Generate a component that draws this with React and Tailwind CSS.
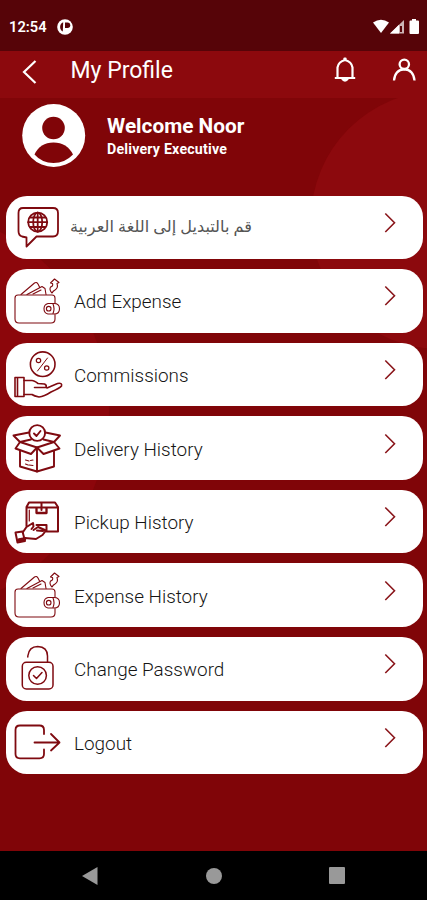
const MENU = [
  { id: "language", label: "قم بالتبديل إلى اللغة العربية", icon: LanguageIcon, arabic: true },
  { id: "add-expense", label: "Add Expense", icon: WalletIcon },
  { id: "commissions", label: "Commissions", icon: CommissionIcon },
  { id: "delivery", label: "Delivery History", icon: OpenBoxIcon },
  { id: "pickup", label: "Pickup History", icon: PickupIcon },
  { id: "expense", label: "Expense History", icon: WalletIcon },
  { id: "password", label: "Change Password", icon: LockIcon },
  { id: "logout", label: "Logout", icon: LogoutIcon },
];

function MenuSvg({ children, width = 1.4 }) {
  return (
    <svg
      viewBox="12 2 52 60"
      className="h-[60px] w-[52px] shrink-0"
      fill="none"
      stroke="#7f0a10"
      strokeWidth={width}
      strokeLinecap="round"
      strokeLinejoin="round"
    >
      {children}
    </svg>
  );
}

function LanguageIcon() {
  return (
    <MenuSvg width={1.8}>
      <path d="M23 13H53Q58 13 58 18V36Q58 41.500 53 41.500H36.500L26.500 51.500V42.500L22 41.500Q18.500 40.500 18.500 36V18Q18.500 13 23 13Z" />
      <circle cx="37.700" cy="27.200" r="9.500" />
      <ellipse cx="37.700" cy="27.200" rx="4.500" ry="9.500" />
      <path d="M37.700 17.700V36.700M28.200 27.200H47.200M30 22.500H45.500M30 32H45.500" />
    </MenuSvg>
  );
}

function WalletIcon() {
  return (
    <MenuSvg width={1.1}>
      <path d="M55 34V29Q55 26 52 26H18Q15 26 15 29V50Q15 54 19 54H51Q55 54 55 50V45.500" />
      <path d="M48 34.500H54Q59.500 34.500 59.500 39.700Q59.500 45 54 45H48Q44 44 44 39.700Q44 35.500 48 34.500Z" />
      <circle cx="48.700" cy="39.700" r="2.300" />
      <path d="M53 35Q55 39.500 53 44.500" />
      <path d="M21 25.500L34.500 14Q36.500 12.500 38 15L39.500 18M27 25.500L42 17.500L45 19.500L46 25.500M33 25L41 21" />
      <path d="M52 24Q49 21 50.500 18Q53.500 17 52.500 14.500L50.500 14L54.500 10L59 13.500L57 14.500Q58.500 19 55 21Q53 22 52 24Z" />
    </MenuSvg>
  );
}

function CommissionIcon() {
  return (
    <MenuSvg width={1.6}>
      <circle cx="42.700" cy="22.200" r="12.300" />
      <path d="M47.500 16L37.500 29" strokeWidth="1" />
      <circle cx="38.500" cy="18.500" r="2.200" strokeWidth="1.200" />
      <circle cx="46.700" cy="26" r="2.200" strokeWidth="1.200" />
      <path d="M15 35.500H24V54.500H15ZM17.500 36V54" />
      <path d="M24 38.500H32Q34 38.500 38 41.500L44.500 42Q47 43 46 45.500H34.500M47 46L57.500 41.500Q62.500 40.500 61.500 44Q60 46 51 50Q44 54.500 39 55Q34 54 32 52.500H24" />
    </MenuSvg>
  );
}

function OpenBoxIcon() {
  return (
    <MenuSvg width={1.9}>
      <circle cx="37.200" cy="17" r="7.900" />
      <path d="M34 17.500L36.500 20L40.500 15" />
      <path d="M29 16.500L13.500 19.500L20 26M45.500 16.500L60 19.500L54 26" />
      <path d="M20 26L15.500 32.500L31 38L37 31.500Z" />
      <path d="M54 26L59.500 32.500L43.500 38L37 31.500Z" />
      <path d="M20 26L31 23.500M54 26L43.500 23.500M37 31.500V55.500" />
      <path d="M20 35V50.500L37 55.500L54 50.500V35" />
      <path d="M25.500 44L29 45M30.500 44.500L33 44M25.500 48L28 49M29 49L33 49.500" strokeWidth="1.100" />
    </MenuSvg>
  );
}

function PickupIcon() {
  return (
    <MenuSvg width={2}>
      <path d="M26.500 36V17L29 12.500H55L58 17V41.500H46.500M26.500 17.500H58M41.500 12.500V20" />
      <path d="M36.500 18.500V23H46.500V18.500" strokeWidth="2.300" />
      <path d="M29.300 20V31" strokeWidth="1.200" />
      <path d="M23 42L26.500 37L33 33L33.500 36.500L31.500 39M36.500 35H46.500V41" />
      <path d="M33.500 40L38 37L46 40.500L42.500 45L36 49L25 48M37 40.500L43 41" />
      <path d="M15.500 42.500L22.500 41.500L25 51L17.500 52.500Z" />
      <path d="M19 50L24.500 49" strokeWidth="3.500" />
    </MenuSvg>
  );
}

function LockIcon() {
  return (
    <MenuSvg width={1.5}>
      <rect x="22.300" y="25.300" width="30.700" height="26.700" rx="4" />
      <path d="M27.800 20V19Q29 9.500 37.700 9.500Q47.500 10 47.500 19V25" />
      <circle cx="37.600" cy="38.500" r="8.800" />
      <path d="M33.500 38.500L36.500 41.500L42 35.500" />
    </MenuSvg>
  );
}

function LogoutIcon() {
  return (
    <MenuSvg width={1.8}>
      <path d="M44 24V20Q44 15.500 39.500 15.500H20Q15.500 15.500 15.500 20V44Q15.500 48.300 20 48.300H39.500Q44 48.300 44 44V39.500M34.500 32.500H59.500M51 24L59.500 32.500L51 40.500" />
    </MenuSvg>
  );
}

function StatusBar() {
  return (
    <div className="flex h-[51px] items-center bg-[#560408] pt-[3px] pr-[6px] pl-[9px] text-white">
      <span className="w-[48px] text-[14.700px] leading-none font-semibold">12:54</span>
      <svg viewBox="0 0 16 16" className="mb-px h-4 w-4">
        <circle cx="8" cy="8" r="7.800" fill="#fff" />
        <path d="M6.200 3.200A5.200 5.200 0 0 0 5.800 12.500Z" fill="#560408" />
        <path d="M8 3.500H10.500A2.700 2.700 0 0 1 10.500 9H8Z" fill="#560408" />
      </svg>
      <svg viewBox="0 0 48 16" className="mb-px ml-auto h-4 w-12" fill="#fff">
        <path d="M0 3.500Q8 -2 16 3.500L8 14Z" />
        <path d="M17 14.500L31 1V14.500Z" opacity=".7" />
        <path d="M17 14.500L26 5.800V14.500Z" />
        <path d="M27 7H29V13H27Z" fill="#560408" />
        <path d="M39 1.500V0H43V1.500H45Q46 1.500 46 2.500V14Q46 15 45 15H37.500Q36.500 15 36.500 14V2.500Q36.500 1.500 37.500 1.500Z" />
      </svg>
    </div>
  );
}

function Header() {
  return (
    <header className="flex h-[47px] items-start bg-[#8c090d] text-white">
      <svg viewBox="0 0 16 26" className="mt-[8px] ml-[22px] h-[26px] w-4" fill="none" stroke="#fff" strokeWidth="2.200">
        <path d="M13.500 2L2 13L13.500 24" />
      </svg>
      <h1 className="mt-[6px] ml-[32.5px] text-[23px] leading-7 font-normal">My Profile</h1>
      <svg viewBox="0 0 24 28" className="mt-[5px] ml-auto h-7 w-6" fill="none" stroke="#fff" strokeWidth="2.200" strokeLinejoin="round">
        <path d="M4.500 21.500V11.500Q5.500 5.500 12 4Q18.500 5.500 19.500 11.500V21.500M1.800 22H22.200" />
        <path d="M9 22.500Q12 27 15 22.500Z" fill="#fff" />
        <path d="M11.500 2.500H12.500V4H11.500Z" fill="#fff" />
      </svg>
      <svg viewBox="0 0 24 24" className="mt-[7px] mr-[11px] ml-[35px] h-6 w-6" fill="none" stroke="#fff" strokeWidth="2.300">
        <circle cx="12.300" cy="6.300" r="4.700" />
        <path d="M2 22.500Q3 11.500 12.300 11.300Q21.500 11.500 22.500 22.500" />
      </svg>
    </header>
  );
}

function MenuItem({ label, icon: Icon, arabic }) {
  return (
    <button className="flex h-[63.5px] w-full items-center rounded-[21px] bg-white pr-[26px] pl-[6.5px]">
      <Icon />
      {arabic ? (
        <span dir="rtl" className="mb-[2px] ml-[6px] w-[182px] whitespace-nowrap text-right font-['Noto_Sans','DejaVu_Sans',sans-serif] text-[16.1px] text-[#555]">
          {label}
        </span>
      ) : (
        <span className="ml-[10px] pt-[3px] text-[18.9px] leading-6 font-light text-[#151515]">{label}</span>
      )}
      <svg viewBox="0 0 14 22" className="mb-[9px] ml-auto h-[22px] w-[14px]" fill="none" stroke="#8a161b" strokeWidth="1.600">
        <path d="M2.300 1.500L11.500 10.800L2.300 20" />
      </svg>
    </button>
  );
}

export default function App() {
  return (
    <div className="flex h-[900px] w-[427px] flex-col overflow-hidden bg-[#800508] font-['Roboto',sans-serif]">
      <StatusBar />
      <Header />
      <main className="relative flex-1 overflow-hidden">
        {/* Background circles */}
        <div className="absolute top-[-7px] left-[311px] h-[258px] w-[258px] rounded-full bg-[#8c090d]" />
        <div className="absolute top-[111px] left-[-295px] h-[404px] w-[404px] rounded-full bg-[#8c060b]" />

        <div className="relative">
          <section className="flex h-[97.5px] items-start pl-[22px] text-white">
            <svg viewBox="0 0 64 64" className="mt-[5px] h-16 w-16">
              <circle cx="31.700" cy="32.500" r="31.500" fill="#fff" />
              <circle cx="31.500" cy="25" r="11.300" fill="#800508" />
              <path d="M12.500 51.500Q18 39.500 31.500 39.500Q45 39.500 51 51.500Q43 60 31.500 60Q20 60 12.500 51.500Z" fill="#800508" />
            </svg>
            <div className="pt-[15px] pl-[21px]">
              <h2 className="text-[20.8px] leading-[26px] font-bold">Welcome Noor</h2>
              <p className="text-[14.2px] leading-5 font-bold tracking-[0.2px]">Delivery Executive</p>
            </div>
          </section>

          <nav className="flex flex-col gap-[10.1px] pr-[4.5px] pl-[5.5px]">
            {MENU.map((item) => (
              <MenuItem key={item.id} {...item} />
            ))}
          </nav>
        </div>
      </main>

      {/* Android navigation */}
      <footer className="flex h-[49px] items-center justify-between bg-black pr-[82px] pl-[82px]">
        <svg viewBox="0 0 16 18" className="h-[18px] w-4" fill="#999">
          <path d="M0 9L15.500 0V18Z" />
        </svg>
        <div className="h-[16px] w-[16px] rounded-full bg-[#999]" />
        <div className="h-[17px] w-[16px] rounded-[1px] bg-[#999]" />
      </footer>
    </div>
  );
}
